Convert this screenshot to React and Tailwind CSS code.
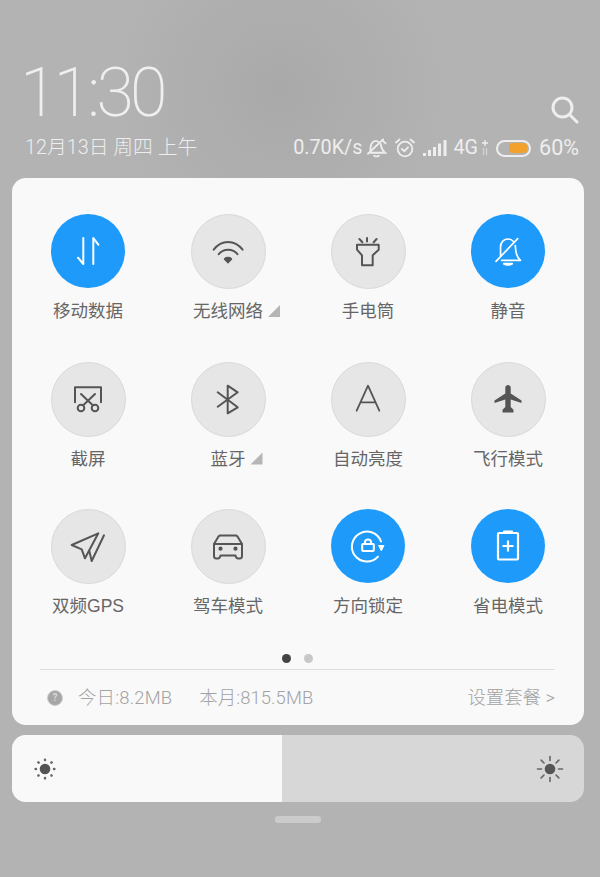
const CJK = 'font-["Roboto","Noto_Sans_CJK_SC",sans-serif]';

function Glyph({ children, stroke = '#555', width = 1.8 }) {
  return (
    <svg width="44" height="44" viewBox="-22 -22 44 44" fill="none" stroke={stroke} strokeWidth={width} strokeLinecap="round" strokeLinejoin="round">
      {children}
    </svg>
  );
}

const tiles = [
  {
    label: '移动数据',
    on: true,
    icon: (
      <Glyph stroke="#fff" width={2}>
        <path d="M-10 6.7L-4.7 13V-13" />
        <path d="M5.3 13V-13L10.3 -6.3" />
      </Glyph>
    ),
  },
  {
    label: '无线网络',
    more: true,
    icon: (
      <Glyph width={2}>
        <path d="M-14.3 -2.3C-6.5 -12.5 6.5 -12.5 14.6 -2.3" />
        <path d="M-9.3 2.2C-4.5 -3.6 4.8 -3.6 9.5 2.2" />
        <path d="M-3.2 7L0 10.4L3.2 7C1.5 5.4 -1.5 5.4 -3.2 7Z" fill="#555" />
      </Glyph>
    ),
  },
  {
    label: '手电筒',
    icon: (
      <Glyph width={2}>
        <path d="M-11 -7.3H10.7V-2.3L4.7 3.3V13.3H-6V3.3L-11 -2.3Z" />
        <path d="M-1 -14V-10.5M-8.6 -13L-5.6 -9.8M8.6 -13L5.6 -9.8" />
      </Glyph>
    ),
  },
  {
    label: '静音',
    on: true,
    icon: (
      <Glyph stroke="#fff" width={1.7}>
        <path d="M-7.5 4.5C-7.3 1 -7.5 -2 -7.5 -3.5C-7.5 -9 -4 -12 0 -12C2 -12 4 -11.3 5.5 -9.5" />
        <path d="M7.3 -5.5C7.8 -1 7 5 12.5 9.3H-6.5" />
        <path d="M9.7 -12.3L-12 10.3" />
        <path d="M-4.3 12.7C-2 14.2 2 14.2 4.3 12.7Z" fill="#fff" />
      </Glyph>
    ),
  },
  {
    label: '截屏',
    icon: (
      <Glyph width={2}>
        <path d="M-13 3.3V-11.7H13V3.3" />
        <circle cx="-7" cy="9" r="3.3" />
        <circle cx="7" cy="9" r="3.3" />
        <path d="M-7 -5L4.8 6.3M7 -5L-4.8 6.3" />
      </Glyph>
    ),
  },
  {
    label: '蓝牙',
    more: true,
    icon: (
      <Glyph width={2}>
        <path d="M-10.3 -6.7L9.7 8.3L-0.3 14.3V-13.3L9.7 -6.7L-10.3 7.7" />
      </Glyph>
    ),
  },
  {
    label: '自动亮度',
    icon: (
      <Glyph>
        <path d="M-11.3 11.7L0 -13.3L11.3 11.7M-7.5 3.3H7.5" />
      </Glyph>
    ),
  },
  {
    label: '飞行模式',
    icon: (
      <Glyph width={0}>
        <path fill="#555" stroke="none" d="M-2.7 -11.5C-2.7 -15 2.7 -15 2.7 -11.5V-5.5L13.5 1.5V4L2.7 0.5V8L5.5 10.8V13.5H-5.5V10.8L-2.7 8V0.5L-13.5 4V1.5L-2.7 -5.5Z" />
      </Glyph>
    ),
  },
  {
    label: '双频GPS',
    icon: (
      <Glyph width={2}>
        <path d="M-16.3 -2L10.3 -13.7L-3 11.3L-6.3 2.3Z" />
        <path d="M16 -11.7L3.7 14L1.3 4" />
      </Glyph>
    ),
  },
  {
    label: '驾车模式',
    icon: (
      <Glyph width={2}>
        <path d="M-14 -3L-9.5 -10.5C-9 -11.3 -8.5 -11.5 -7.5 -11.5H7.5C8.5 -11.5 9 -11.3 9.5 -10.5L14 -3" />
        <path d="M-14 -3H14V9C14 10.5 13.3 11.5 11.5 11.5H10C8.5 11.5 8 10.5 7.5 8.5H-7.5C-8 10.5 -8.5 11.5 -10 11.5H-11.5C-13.3 11.5 -14 10.5 -14 9Z" />
        <circle cx="-7.5" cy="1.7" r="1.1" fill="#555" />
        <circle cx="7.5" cy="1.7" r="1.1" fill="#555" />
      </Glyph>
    ),
  },
  {
    label: '方向锁定',
    on: true,
    icon: (
      <Glyph stroke="#fff" width={2}>
        <path d="M10 10.7A15 15 0 1 1 13 -4.5" />
        <path d="M11 -0.5H16L13.5 4.5Z" fill="#fff" strokeWidth="1" />
        <rect x="-5.8" y="-2" width="11.6" height="7" rx="0.8" />
        <path d="M-3 -2V-4C-3 -7.5 3 -7.5 3 -4V-2" />
      </Glyph>
    ),
  },
  {
    label: '省电模式',
    on: true,
    icon: (
      <Glyph stroke="#fff" width={2.2}>
        <rect x="-10" y="-13" width="20" height="26.5" rx="1" />
        <path d="M-4 -14.5H4" />
        <path d="M-4.7 0H4.7M0 -4.7V4.7" />
      </Glyph>
    ),
  },
];

function Tile({ label, on, more, icon }) {
  return (
    <div className="flex flex-col items-center">
      <div
        className={
          on
            ? 'w-[74px] h-[74px] rounded-full bg-[#1e9bfa] flex items-center justify-center'
            : 'w-[75px] h-[75px] rounded-full bg-[#e6e6e6] border border-[#d9d9d9] flex items-center justify-center'
        }
      >
        {icon}
      </div>
      <div className={on ? 'mt-[11px] relative h-6 leading-6 text-[17.5px] text-[#666] font-["Liberation_Sans","Noto_Sans_CJK_SC",sans-serif]' : 'mt-[10px] relative h-6 leading-6 text-[17.5px] text-[#666] font-["Liberation_Sans","Noto_Sans_CJK_SC",sans-serif]'}>
        {label}
        {more && <span className="absolute left-full top-[6px] ml-[5px] w-[12px] h-[12px] bg-[#b5b5b5] [clip-path:polygon(100%_0,100%_100%,0_100%)]" />}
      </div>
    </div>
  );
}

function StatusIcons() {
  return (
    <>
      <svg width="21" height="20" viewBox="0 0 22 20" fill="none" stroke="#eee" strokeWidth="1.9" strokeLinecap="round" className="ml-[4px]">
        <path d="M4.5 12C5 9 4.5 6 7 4C9.5 2 12 2.5 13.5 4" />
        <path d="M15.5 6C16 9 16 12 20 15H5" />
        <path d="M18 1L2 16" />
        <path d="M8.5 18C10 19 12 19 13.5 18" />
        <path d="M17 2L20.5 5" />
      </svg>
      <svg width="20" height="20" viewBox="0 0 20 20" fill="none" stroke="#eee" strokeWidth="1.8" strokeLinecap="round" strokeLinejoin="round" className="ml-[8px]">
        <circle cx="10" cy="11" r="7.3" />
        <path d="M6.8 11L9.4 13.2L13 9.3" />
        <path d="M1 4.5L4.5 1.5M19 4.5L15.5 1.5" />
      </svg>
      <svg width="24" height="16" viewBox="0 0 24 16" fill="#eee" className="ml-[8px]">
        <rect x="0" y="13" width="3" height="3" />
        <rect x="5" y="10" width="3" height="6" />
        <rect x="10" y="7" width="3" height="9" />
        <rect x="15" y="3.5" width="3" height="12.5" />
        <rect x="20.5" y="0" width="3" height="16" />
      </svg>
      <span className="ml-[6px] text-[#eee]">4G</span>
      <svg width="8" height="16" viewBox="0 0 8 16" fill="none" stroke="#eee" strokeWidth="1.3" className="ml-[3px]">
        <path d="M4 0V6M1 3H7" />
        <path d="M2.5 8V15M5.5 8V15" strokeOpacity="0.55" />
      </svg>
      <div className="ml-[7px] w-[35px] h-[17px] rounded-full border-2 border-[#eee] flex items-center justify-end pr-[2px]">
        <div className="w-[18px] h-[10px] rounded-[3px] bg-[#f2a22c]" />
      </div>
    </>
  );
}

function Sun({ big }) {
  const angles = [0, 45, 90, 135, 180, 225, 270, 315];
  return (
    <svg width="28" height="28" viewBox="-14 -14 28 28" stroke="#666" strokeLinecap="round">
      <circle r="5.3" fill="#555" stroke="none" />
      {angles.map((a) => (
        <line
          key={a}
          x1={big ? 8.5 : 9}
          x2={big ? 12.5 : 9.4}
          y1="0"
          y2="0"
          strokeWidth={big ? 1.6 : 2.4}
          transform={`rotate(${a})`}
        />
      ))}
    </svg>
  );
}

export default function App() {
  return (
    <div className={`w-[600px] h-[877px] overflow-hidden bg-[#b1b1b1] bg-[radial-gradient(circle_at_280px_90px,#a9a9a9,#b3b3b3_170px)] ${CJK}`}>
      {/* Clock */}
      <div className="h-[178px] pt-[58px] pl-[20px] pr-[21px]">
        <div className="flex justify-between items-end h-[68px]">
          <div className="text-[68px] leading-[74px] font-extralight text-[#efefef] tracking-[-3.8px] mb-[-4px]">11:30</div>
          <svg width="28" height="28" viewBox="0 0 28 28" fill="none" stroke="#eee" strokeWidth="3" strokeLinecap="round" className="mb-[2px]">
            <circle cx="11.5" cy="11.5" r="9.5" />
            <path d="M18.5 18.5L26 26" />
          </svg>
        </div>
        <div className="mt-[8px] flex items-center justify-between h-[28px] text-[19.8px] text-[#eee]">
          <div className="ml-[5px] font-light">12月13日 周四 上午</div>
          <div className="flex items-center">
            <span>0.70K/s</span>
            <StatusIcons />
            <span className="ml-[8px] text-[21.5px]">60%</span>
          </div>
        </div>
      </div>

      {/* Toggle panel */}
      <div className="ml-3 w-[572px] h-[547px] rounded-[14px] bg-[#f9f9f9] pt-[36px]">
        <div className="grid grid-cols-4 gap-y-[38.5px] px-[6px]">
          {tiles.map((t) => (
            <Tile key={t.label} {...t} />
          ))}
        </div>
        <div className="mt-[36px] flex justify-center gap-[13px] pr-[1px] h-[8px]">
          <span className="w-[9px] h-[9px] rounded-full bg-[#444]" />
          <span className="w-[9px] h-[9px] rounded-full bg-[#c8c8c8]" />
        </div>
        <div className="mt-[7px] ml-[28px] mr-[29px] border-t border-[#dedede]" />
        <div className="flex items-center h-[55px] pl-[35px] pr-[29px] text-[18.4px] text-[#a3a3a3] font-light">
          <span className="w-[16px] h-[16px] rounded-full bg-[#a6a6a6] border border-[#cfcfcf] flex items-center justify-center text-[10px] text-[#d8d8d8] font-bold">?</span>
          <span className="ml-[15px] tracking-[0.2px]">今日:8.2MB</span>
          <span className="ml-[27px] tracking-[0.1px]">本月:815.5MB</span>
          <span className="ml-auto">设置套餐 &gt;</span>
        </div>
      </div>

      {/* Brightness */}
      <div className="ml-3 w-[572px] mt-[10px] h-[67px] rounded-[14px] overflow-hidden bg-[#d7d7d7] flex">
        <div className="w-[270px] bg-[#f9f9f9] flex items-center pl-[19px]">
          <Sun />
        </div>
        <div className="flex-1 flex items-center justify-end pr-[20px]">
          <Sun big />
        </div>
      </div>

      <div className="mt-[14px] ml-[275px] w-[46px] h-[7px] rounded-[3px] bg-[#cbcbcb]" />
    </div>
  );
}
